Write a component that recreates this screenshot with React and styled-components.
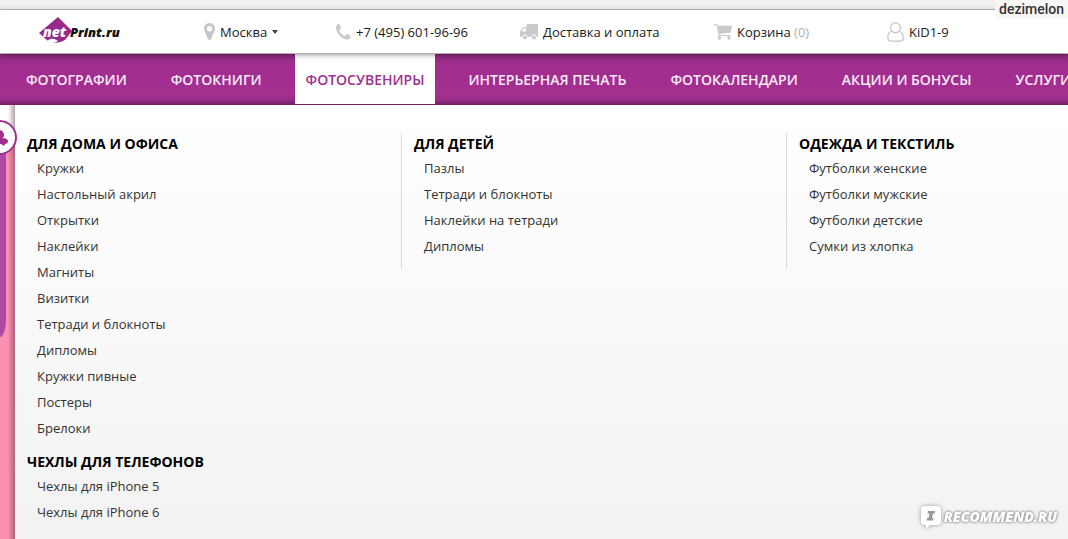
import React from "react";
import styled, { createGlobalStyle } from "styled-components";

const GlobalStyle = createGlobalStyle`
  *, *::before, *::after { box-sizing: border-box; }
  html, body, #root { height: 100%; }
  body {
    margin: 0;
    background: #fff;
    font-family: "Open Sans", sans-serif;
    font-size: 13px;
    color: #1a1a1a;
    overflow: hidden;
  }
  a { color: inherit; text-decoration: none; }
`;

const Page = styled.div`
  min-height: 100%;
  display: flex;
  flex-direction: column;
  overflow: hidden;
`;

const BrowserEdge = styled.div`
  height: 10px;
  background: #f2f1f0;
  border-bottom: 1px solid #c4c4c4;
`;

const TopBar = styled.header`
  position: relative;
  height: 44px;
  padding: 0 38px;
  display: grid;
  grid-template-columns: 166px 132px 184px 194px 173px 1fr;
  align-items: center;
  background: #fff;
  border-bottom: 1px solid #b5aab3;
  white-space: nowrap;
  box-shadow: 0 1px 5px rgba(0, 0, 0, 0.4);
  z-index: 1;
`;

const LogoLink = styled.a`
  display: flex;
`;

const TopLink = styled.a`
  display: flex;
  align-items: center;
  gap: 5px;
  line-height: 18px;
  svg { flex: none; }
`;

const CityButton = styled.button`
  display: flex;
  align-items: center;
  gap: 5px;
  padding: 0;
  border: 0;
  background: none;
  font: inherit;
  line-height: 18px;
  color: inherit;
`;

const Count = styled.span`
  color: #b0b0b0;
`;

const UserTag = styled.div`
  position: absolute;
  top: 0;
  right: 0;
  z-index: 2;
  padding: 0 4px;
  background: #f8f7f7;
  font-family: Roboto, sans-serif;
  font-weight: 500;
  font-size: 14px;
  line-height: 19px;
  color: #333;
`;

const Nav = styled.nav`
  height: 51px;
  padding-left: 15px;
  display: flex;
  gap: 22px;
  background: linear-gradient(#8a2a7c, #a02d8f 10px, #a3308f 40px, #972b86 46px, #6f1f63);
  white-space: nowrap;
`;

const NavLink = styled.a`
  display: flex;
  align-items: center;
  padding: 1px 11px 0;
  margin-bottom: 1px;
  font-size: 14px;
  font-weight: 600;
  color: ${(p) => (p.$active ? "#a0308f" : "#fbeaf8")};
  background: ${(p) => (p.$active ? "#fff" : "transparent")};
`;

const Body = styled.main`
  flex: 1;
  display: flex;
`;

const Backdrop = styled.aside`
  position: relative;
  flex: none;
  width: 15px;
  padding-top: 35px;
  display: flex;
  background: linear-gradient(#fff 35px, #fb90b1 35px);
  &::after {
    content: "";
    position: absolute;
    inset: 0 0 0 auto;
    width: 7px;
    background: linear-gradient(to right, rgba(60, 30, 40, 0), rgba(60, 30, 40, 0.4));
  }
`;

const Ribbon = styled.div`
  width: 6px;
  height: 197px;
  border-bottom-right-radius: 6px 18px;
  background: #aa4aa0;
`;

const Badge = styled.span`
  position: absolute;
  z-index: 1;
  left: -18px;
  top: 15px;
  width: 35px;
  height: 35px;
  display: flex;
  align-items: center;
  justify-content: center;
  border: 2px solid #a0308f;
  border-radius: 50%;
  background: #fff;
`;

const Menu = styled.section`
  flex: 1;
  min-width: 0;
  padding-top: 28px;
  display: grid;
  grid-template-columns: minmax(386px, 1fr) repeat(2, minmax(385px, 1fr));
  align-items: start;
  background: linear-gradient(#fff, #fbfbfb 35%, #f2f2f2);
`;

const Column = styled.div`
  padding-left: 12px;
  border-left: ${(p) => (p.$ruled ? "1px solid #d9d9d9" : "0")};
`;

const Group = styled.section`
  padding-bottom: 10px;
`;

const Heading = styled.h2`
  margin: 0;
  font-size: 14px;
  line-height: 22px;
  font-weight: 700;
  color: #000;
`;

const List = styled.ul`
  margin: 0;
  padding: 0 0 0 10px;
  list-style: none;
`;

const Item = styled.li`
  line-height: 26px;
  color: #333;
`;

const Watermark = styled.a`
  position: fixed;
  right: 11px;
  bottom: 8px;
  display: flex;
  align-items: center;
  gap: 2px;
  color: #fff;
  font-size: 14px;
  line-height: 28px;
  font-weight: 800;
  font-style: italic;
  text-shadow: 0 0 3px #999, 0 0 3px #999, 0 0 2px #aaa;
  svg { filter: drop-shadow(0 0 2px #999); }
`;

const Logo = () => (
  <svg width="90" height="30" viewBox="0 0 90 30" role="img" aria-label="netPrint.ru">
    <path d="M20 0 L34 14 L27 23 Q19 28 10 24 L1 16 Z" fill="#96298a" />
    <path d="M9 24 Q14 19 20 24 Q14 28 9 24 Z" fill="#fff" />
    <text x="5" y="20" fontFamily="Open Sans" fontSize="14" fontWeight="800" fontStyle="italic" fill="#fff">net</text>
    <text x="32" y="20" fontFamily="Open Sans" fontSize="13" fontWeight="800" fontStyle="italic" fill="#111">Print.ru</text>
  </svg>
);

const Pin = () => (
  <svg width="11" height="17" viewBox="0 0 11 17" fill="#c6c6c6" aria-hidden="true">
    <path fillRule="evenodd" d="M5.500 0 A5.500 5.500 0 0 1 11 5.500 C11 8 9 10.500 7.600 15.300 Q6.500 17.600 4.400 16.600 Q3.500 16 3 14 C2 10.500 0 8 0 5.500 A5.500 5.500 0 0 1 5.500 0 Z M5.500 3 A2.700 2.700 0 1 0 5.500 8.400 A2.700 2.700 0 1 0 5.500 3 Z" />
  </svg>
);

const Phone = () => (
  <svg width="15" height="16" viewBox="0 0 15 16" fill="#cacaca" aria-hidden="true">
    <path d="M0 3.500 C0 1.700 1.400 0 3 0 C3.600 0 5 3.300 5 4 C5 4.900 3.200 5.500 3.300 6.400 C3.600 8.300 6.800 11.600 8.700 11.800 C9.700 12 10.300 10 11.200 10 C12 10 15 11.900 15 12.500 C15 14 13 15.500 11 15.500 C6.500 15.500 0 9.500 0 3.500 Z" />
  </svg>
);

const Truck = () => (
  <svg width="18" height="16" viewBox="0 0 18 16" fill="#cacaca" aria-hidden="true">
    <path fillRule="evenodd" d="M7.500 0 H17 Q18 0 18 1 V12 Q18 13 16.500 13 A2.500 2.500 0 0 0 11.500 13 H7.500 A2.500 2.500 0 0 0 2.500 13 Q0 13 0 12 V7.500 L3 3 H6.500 V1 Q6.500 0 7.500 0 Z M1.500 7.500 H6 V4.200 H3.700 Z" />
    <circle cx="5" cy="13.500" r="2" />
    <circle cx="14" cy="13.500" r="2" />
  </svg>
);

const Cart = () => (
  <svg width="18" height="16" viewBox="0 0 18 16" fill="#cacaca" aria-hidden="true">
    <path d="M0 0 H3.500 L4 1.800 H18 L16.800 8.500 L5.300 9.900 L5.500 11 H16.500 V12.300 H4.500 L2.600 1.300 H0 Z" />
    <circle cx="5.500" cy="14" r="1.700" />
    <circle cx="15" cy="14" r="1.700" />
  </svg>
);

const User = () => (
  <svg width="17" height="20" viewBox="0 0 17 20" fill="none" stroke="#c4c4c4" strokeWidth="1.200" aria-hidden="true">
    <circle cx="8.500" cy="5.800" r="4.900" />
    <path d="M4.600 9.500 C1.800 10 .8 12.500 .8 15.500 C.8 18 2 19.200 4 19.200 H13 C15 19.200 16.200 18 16.200 15.500 C16.200 12.500 15.200 10 12.400 9.500" />
  </svg>
);

const NAV = [
  "ФОТОГРАФИИ",
  "ФОТОКНИГИ",
  "ФОТОСУВЕНИРЫ",
  "ИНТЕРЬЕРНАЯ ПЕЧАТЬ",
  "ФОТОКАЛЕНДАРИ",
  "АКЦИИ И БОНУСЫ",
  "УСЛУГИ",
];

const COLUMNS = [
  [
    {
      title: "ДЛЯ ДОМА И ОФИСА",
      items: [
        "Кружки",
        "Настольный акрил",
        "Открытки",
        "Наклейки",
        "Магниты",
        "Визитки",
        "Тетради и блокноты",
        "Дипломы",
        "Кружки пивные",
        "Постеры",
        "Брелоки",
      ],
    },
    { title: "ЧЕХЛЫ ДЛЯ ТЕЛЕФОНОВ", items: ["Чехлы для iPhone 5", "Чехлы для iPhone 6"] },
  ],
  [{ title: "ДЛЯ ДЕТЕЙ", items: ["Пазлы", "Тетради и блокноты", "Наклейки на тетради", "Дипломы"] }],
  [
    {
      title: "ОДЕЖДА И ТЕКСТИЛЬ",
      items: ["Футболки женские", "Футболки мужские", "Футболки детские", "Сумки из хлопка"],
    },
  ],
];

export default function App() {
  return (
    <Page>
      <GlobalStyle />
      <BrowserEdge />
      <UserTag>dezimelon</UserTag>
      <TopBar>
        <LogoLink href="#">
          <Logo />
        </LogoLink>
        <CityButton type="button">
          <Pin />
          <span>Москва</span>
          <svg width="6" height="4" viewBox="0 0 6 4" fill="#444" aria-hidden="true">
            <path d="M0 0 H6 L3 4 Z" />
          </svg>
        </CityButton>
        <TopLink href="tel:+74956019696">
          <Phone />
          +7 (495) 601-96-96
        </TopLink>
        <TopLink href="#">
          <Truck />
          Доставка и оплата
        </TopLink>
        <TopLink href="#">
          <Cart />
          <span>
            Корзина <Count>(0)</Count>
          </span>
        </TopLink>
        <TopLink href="#">
          <User />
          KiD1-9
        </TopLink>
      </TopBar>
      <Nav>
        {NAV.map((label) => (
          <NavLink key={label} href="#" $active={label === "ФОТОСУВЕНИРЫ"}>
            {label}
          </NavLink>
        ))}
      </Nav>
      <Body>
        <Backdrop>
          <Ribbon />
          <Badge>
            <svg width="24" height="24" viewBox="0 0 24 24" fill="#a0308f" aria-hidden="true">
              <circle cx="11" cy="9" r="5" />
              <path d="M5 13 H14 Q16 11 18 13 Q20 13 20 16 Q19 18 17 18 L16 20 L13 18 H5 Z" />
            </svg>
          </Badge>
        </Backdrop>
        <Menu>
          {COLUMNS.map((groups, i) => (
            <Column key={i} $ruled={i > 0}>
              {groups.map((g) => (
                <Group key={g.title}>
                  <Heading>{g.title}</Heading>
                  <List>
                    {g.items.map((t) => (
                      <Item key={t}>
                        <a href="#">{t}</a>
                      </Item>
                    ))}
                  </List>
                </Group>
              ))}
            </Column>
          ))}
        </Menu>
      </Body>
      <Watermark href="#">
        <svg width="22" height="24" viewBox="0 0 22 24" aria-hidden="true">
          <path d="M5 1 H17 Q21 1 21 5 V16 Q21 20 17 20 H10 L6 24 V20 Q1 20 1 16 V5 Q1 1 5 1 Z" fill="#fff" />
          <path d="M8 6 H15 L14.500 8.500 H13 L12 13 H13.500 L13 15.500 H6.500 L7 13 H8.500 L9.500 8.500 H7.500 Z" fill="#999" />
        </svg>
        RECOMMEND.RU
      </Watermark>
    </Page>
  );
}
